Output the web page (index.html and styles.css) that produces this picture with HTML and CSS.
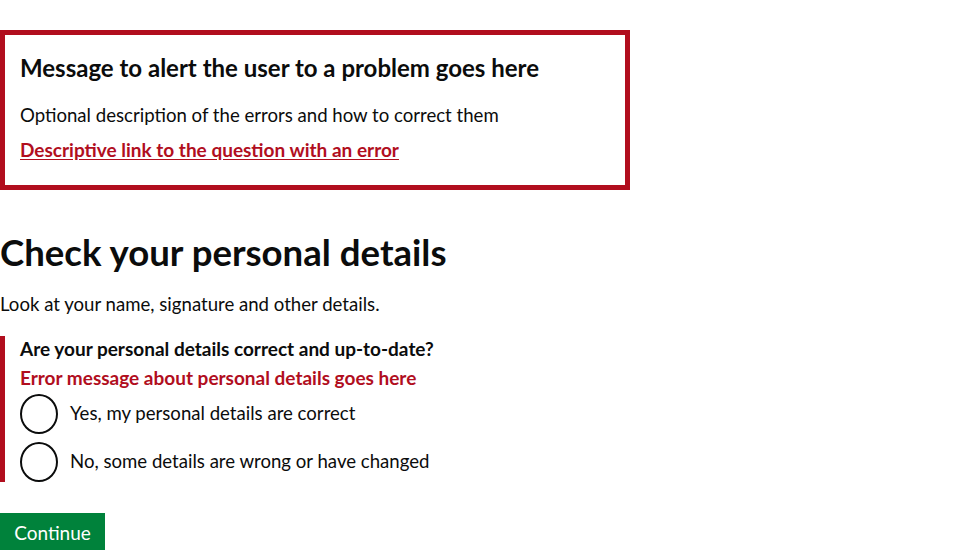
FILE: index.html
```html
<!DOCTYPE html>
<html lang="en">
<head>
<meta charset="utf-8">
<title>Check your personal details</title>
<link rel="stylesheet" href="styles.css">
</head>
<body>
<main class="page">
  <div class="error-summary" role="alert">
    <h2 class="error-summary__title">Message to alert the user to a problem goes here</h2>
    <p class="error-summary__body">Optional description of the errors and how to correct them</p>
    <ul class="error-summary__list">
      <li><a href="#details" class="error-summary__link">Descriptive link to the question with an error</a></li>
    </ul>
  </div>

  <h1 class="heading-xl">Check your personal details</h1>
  <p class="body">Look at your name, signature and other details.</p>

  <div class="form-group form-group--error">
    <fieldset class="fieldset">
      <legend class="legend">Are your personal details correct and up-to-date?</legend>
      <span class="error-message">Error message about personal details goes here</span>
      <div class="radios">
        <label class="radio">
          <input type="radio" name="details" class="radio__input">
          <span class="radio__circle"></span>
          <span class="radio__label">Yes, my personal details are correct</span>
        </label>
        <label class="radio">
          <input type="radio" name="details" class="radio__input">
          <span class="radio__circle"></span>
          <span class="radio__label">No, some details are wrong or have changed</span>
        </label>
      </div>
    </fieldset>
  </div>

  <button class="button" type="submit">Continue</button>
</main>
</body>
</html>
```
FILE: styles.css
```css
* { box-sizing: border-box; }
html, body { margin: 0; padding: 0; background: #fff; }
body {
  font-family: "Lato", "Noto Sans", sans-serif;
  color: #0b0c0c;
}
.page { padding-top: 30px; }

.error-summary {
  width: 630px;
  border: 5px solid #b10e1e;
  padding: 15px 15px 23px 15px;
}
.error-summary__title {
  margin: 0 0 17px;
  font-size: 24px;
  line-height: 36px;
  font-weight: 700;
}
.error-summary__body {
  margin: 0 0 9px;
  font-size: 18.6px;
  line-height: 25px;
}
.error-summary__list { list-style: none; margin: 0; padding: 0; }
.error-summary__link {
  color: #b10e1e;
  font-weight: 700;
  font-size: 19px;
  line-height: 25px;
  text-decoration: underline;
  text-underline-offset: 2px;
}

.heading-xl {
  margin: 42px 0 20px;
  font-size: 36.6px;
  line-height: 40px;
  font-weight: 700;
}
.body {
  margin: 0 0 19px;
  font-size: 18.6px;
  line-height: 25px;
}

.form-group--error {
  border-left: 5px solid #b10e1e;
  padding-left: 15px;
  margin-bottom: 31px;
}
.fieldset { border: 0; margin: 0; padding: 0; }
.legend {
  padding: 0;
  margin: 0 0 4px;
  font-size: 19px;
  line-height: 25px;
  font-weight: 700;
}
.error-message {
  display: block;
  color: #b10e1e;
  font-weight: 700;
  font-size: 19px;
  line-height: 25px;
  margin-bottom: 4px;
}
.radios { display: flex; flex-direction: column; gap: 8px; }
.radio { display: flex; align-items: center; gap: 12px; cursor: pointer; }
.radio__input { position: absolute; opacity: 0; width: 0; height: 0; margin: 0; }
.radio__circle {
  width: 38px; height: 40px;
  border: 2px solid #0b0c0c;
  border-radius: 50%;
  flex: none;
}
.radio__label {
  font-size: 18.6px;
  line-height: 25px;
  padding-bottom: 2px;
}

.button {
  font-family: inherit;
  background: #00823b;
  color: #fff;
  border: 0;
  width: 105px;
  height: 40px;
  font-size: 19px;
  line-height: 25px;
  padding: 7px 0 8px;
  text-align: center;
  margin: 0;
  cursor: pointer;
}
```
